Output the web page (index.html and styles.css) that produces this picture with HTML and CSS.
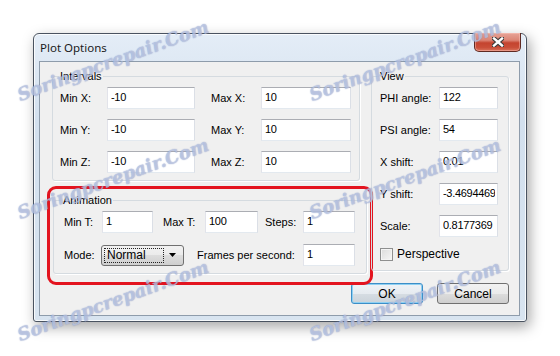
FILE: index.html
```html
<!DOCTYPE html>
<html lang="en">
<head>
<meta charset="UTF-8">
<title>Plot Options</title>
<link rel="stylesheet" href="styles.css">
</head>
<body>
<div class="window">
    <div class="titlebar">
        <span class="title">Plot Options</span>
        <button class="close" type="button">
            <svg width="12" height="10" viewBox="0 0 12 10">
                <path d="M2 1.5 L10 8.5 M10 1.5 L2 8.5" stroke="#3b3b3b" stroke-width="4.6" stroke-linecap="square"/>
                <path d="M2 1.5 L10 8.5 M10 1.5 L2 8.5" stroke="#fff" stroke-width="2.4" stroke-linecap="square"/>
            </svg>
        </button>
    </div>
    <div class="client">
        <div class="top">
            <div class="left">
                <div class="group intervals">
                    <span class="legend">Intervals</span>
                    <div class="interval-grid">
                        <label>Min X:</label><input type="text" value="-10"><label class="max">Max X:</label><input type="text" value="10">
                        <label>Min Y:</label><input type="text" value="-10"><label class="max">Max Y:</label><input type="text" value="10">
                        <label>Min Z:</label><input type="text" value="-10"><label class="max">Max Z:</label><input type="text" value="10">
                    </div>
                </div>
                <div class="highlight">
                    <div class="group animation">
                        <span class="legend">Animation</span>
                        <div class="anim-row">
                            <label class="l-min">Min T:</label><input class="i-min" type="text" value="1">
                            <label class="l-max">Max T:</label><input class="i-max" type="text" value="100">
                            <label class="l-steps">Steps:</label><input class="i-small" type="text" value="1">
                        </div>
                        <div class="anim-row">
                            <label class="l-mode">Mode:</label>
                            <div class="combo">
                                <span class="combo-value">Normal</span>
                                <span class="combo-arrow">
                                    <svg width="7" height="4" viewBox="0 0 7 4"><path d="M0 0 H7 L3.5 4 Z" fill="#000"/></svg>
                                </span>
                            </div>
                            <label class="l-fps">Frames per second:</label><input class="i-small" type="text" value="1">
                        </div>
                    </div>
                </div>
            </div>
            <div class="group view">
                <span class="legend">View</span>
                <div class="view-row"><label>PHI angle:</label><input type="text" value="122"></div>
                <div class="view-row"><label>PSI angle:</label><input type="text" value="54"></div>
                <div class="view-row"><label>X shift:</label><input type="text" value="0.01"></div>
                <div class="view-row"><label>Y shift:</label><input type="text" value="-3.4694469"></div>
                <div class="view-row"><label>Scale:</label><input type="text" value="0.8177369"></div>
                <div class="check-row"><span class="checkbox"></span><span>Perspective</span></div>
            </div>
        </div>
        <div class="buttons">
            <button class="btn default" type="button">OK</button>
            <button class="btn" type="button">Cancel</button>
        </div>
    </div>
</div>
<div class="watermarks">
    <span class="mark m1">Soringpcrepair.Com</span>
    <span class="mark m2">Soringpcrepair.Com</span>
    <span class="mark m3">Soringpcrepair.Com</span>
    <span class="mark m4">Soringpcrepair.Com</span>
    <span class="mark m5">Soringpcrepair.Com</span>
    <span class="mark m6">Soringpcrepair.Com</span>
</div>
</body>
</html>
```

FILE: styles.css
```css
body {
    margin: 0;
    background: #fff;
    font-family: "Liberation Sans", Arial, sans-serif;
    font-size: 11px;
    color: #000;
    position: relative;
    width: 560px;
    height: 356px;
    overflow: hidden;
}
.window {
    margin: 33px 0 0 33px;
    width: 494px;
    height: 289px;
    box-sizing: border-box;
    border: 1px solid #4a5360;
    border-radius: 6px 6px 3px 3px;
    background: linear-gradient(#e4edf7, #d3e0ee 30%, #d8e4f0);
    box-shadow: inset 0 0 0 1px rgba(255, 255, 255, 0.8), 3px 5px 14px rgba(0, 0, 0, 0.35);
    padding: 0 6px 5px 5px;
    display: flex;
    flex-direction: column;
}
.titlebar {
    height: 27px;
    display: flex;
    align-items: center;
    padding-left: 1px;
}
.title {
    font-family: "Noto Sans", sans-serif;
    font-size: 11.5px;
    color: #1a1a1a;
}
.close {
    margin-left: auto;
    margin-right: -1px;
    align-self: flex-start;
    margin-top: -1px;
    width: 47px;
    height: 19px;
    padding: 0;
    border: 1px solid #5f2a22;
    border-top: none;
    border-radius: 0 0 5px 5px;
    background: linear-gradient(#e7a497 0%, #dc8575 40%, #c4442f 55%, #c94e38 80%, #d9735c 100%);
    box-shadow: inset 0 0 0 1px rgba(255, 200, 190, 0.45);
    display: flex;
    align-items: center;
    justify-content: center;
}
.client {
    height: 255px;
    box-sizing: border-box;
    border: 1px solid #8e9cab;
    background: #f0f0f0;
    padding: 14px 10px 0 12px;
}
.top {
    display: grid;
    grid-template-columns: 315px 138px;
    column-gap: 4px;
    align-items: start;
}
.group {
    position: relative;
    box-sizing: border-box;
    border: 1px solid #d5dbe0;
    border-radius: 3px;
    box-shadow: 1px 1px 0 #fff;
}
.legend {
    position: absolute;
    top: -8px;
    left: 6px;
    padding: 0 1px;
    line-height: 14px;
    background: #f0f0f0;
}
label {
    white-space: nowrap;
}
input[type="text"] {
    box-sizing: border-box;
    height: 22px;
    margin: 0;
    padding: 0 2px 2px 3px;
    border: 1px solid;
    border-color: #abadb3 #dbdfe6 #e3e9ef #e2e3ea;
    background: #fff;
    font-family: "Liberation Sans", Arial, sans-serif;
    font-size: 11px;
    letter-spacing: -0.3px;
    color: #000;
    outline: none;
}
.intervals {
    width: 308px;
    padding: 10px 8px 7px 7px;
}
.interval-grid {
    display: grid;
    grid-template-columns: 47px 88px 66px 90px;
    row-gap: 10px;
    align-items: center;
}
.interval-grid input {
    width: 100%;
}
.interval-grid .max {
    padding-left: 16px;
}
.highlight {
    position: relative;
    margin: 19px 0 0 1px;
    width: 314px;
}
.highlight::after {
    content: "";
    position: absolute;
    left: -6px;
    top: -14px;
    right: -6px;
    bottom: -11px;
    border: 3px solid #e3141f;
    border-radius: 9px;
    pointer-events: none;
}
.animation {
    padding: 10px 11px 7px 10px;
}
.animation .legend {
    left: 8px;
}
.anim-row {
    display: flex;
    align-items: center;
    height: 22px;
}
.anim-row + .anim-row {
    margin-top: 11px;
}
.l-min { width: 38px; }
.i-min { width: 51px; }
.l-max { width: 42px; margin-left: 10px; }
.i-max { width: 53px; }
.l-steps { width: 38px; margin-left: 7px; }
.i-small { width: 52px; }
.l-mode { width: 37px; }
.l-fps { width: 106px; margin-left: 13px; }
.combo {
    box-sizing: border-box;
    width: 83px;
    height: 21px;
    border: 1px solid #707070;
    border-radius: 3px;
    background: linear-gradient(#f2f2f2, #ebebeb 50%, #dddddd 50%, #cfcfcf);
    display: flex;
    align-items: center;
    padding: 2px;
}
.combo-value {
    box-sizing: border-box;
    width: 60px;
    height: 15px;
    line-height: 13px;
    border: 1px dotted #222;
    padding-left: 2px;
    font-size: 12px;
}
.combo-arrow {
    flex: 1;
    display: flex;
    justify-content: center;
    align-items: center;
}
.view {
    height: 195px;
    padding: 10px 10px 5px 8px;
}
.view .legend {
    left: 7px;
}
.view-row {
    display: flex;
    align-items: center;
    height: 22px;
    margin-bottom: 10px;
}
.view-row label {
    width: 59px;
}
.view-row input {
    width: 59px;
}
.check-row {
    display: flex;
    align-items: center;
    height: 22px;
    margin-top: -4px;
    gap: 4px;
    font-size: 12px;
}
.checkbox {
    box-sizing: border-box;
    width: 13px;
    height: 13px;
    border: 1px solid #8e8f8f;
    background: linear-gradient(135deg, #dcdcdc, #f6f6f6);
    box-shadow: inset 0 0 0 1px #f4f4f4;
}
.buttons {
    display: flex;
    justify-content: flex-end;
    gap: 14px;
    margin-top: 9px;
}
.btn {
    width: 72px;
    height: 21px;
    padding: 0;
    border: 1px solid #707070;
    border-radius: 3px;
    background: linear-gradient(#f2f2f2, #ebebeb 50%, #dddddd 50%, #cfcfcf);
    font-family: "Liberation Sans", Arial, sans-serif;
    font-size: 12px;
    color: #000;
}
.btn.default {
    border-color: #3c8fc8;
    box-shadow: inset 0 0 0 1px #8fd0f2;
    background: linear-gradient(#eef3f7, #e6ebf0 50%, #d6dde3 50%, #cbd3da);
}
.watermarks {
    position: absolute;
    inset: 0;
    pointer-events: none;
}
.mark {
    position: absolute;
    width: 210px;
    text-align: center;
    font-family: "DejaVu Serif", serif;
    font-style: italic;
    font-weight: bold;
    font-size: 18px;
    color: rgba(215, 222, 240, 0.55);
    text-shadow: 0 0 1px rgba(110, 130, 185, 0.55), 0 0 1px rgba(110, 130, 185, 0.4);
    transform: rotate(-20deg);
}
.m1 { left: 8px; top: 50px; }
.m2 { left: 300px; top: 50px; }
.m3 { left: 8px; top: 168px; }
.m4 { left: 300px; top: 168px; }
.m5 { left: 8px; top: 290px; }
.m6 { left: 300px; top: 290px; }
```
